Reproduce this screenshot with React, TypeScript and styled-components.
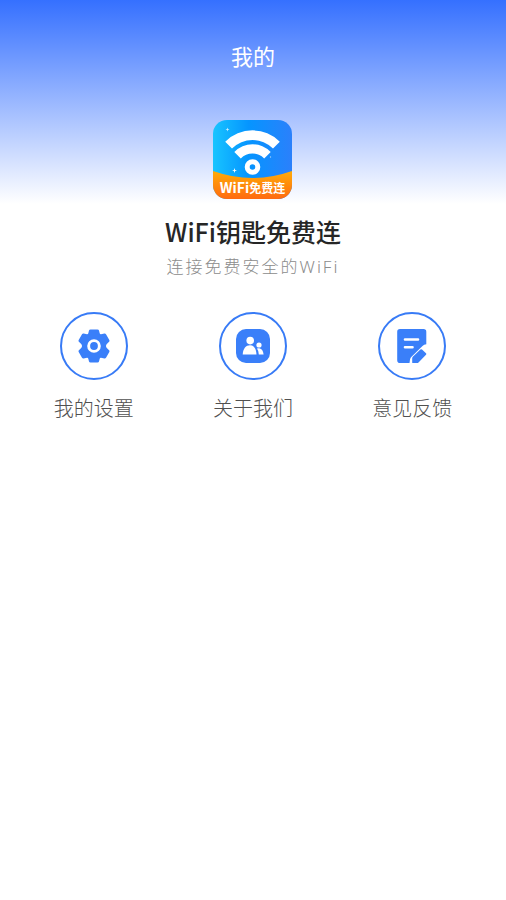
import React from "react";
import styled, { createGlobalStyle } from "styled-components";

const GlobalStyle = createGlobalStyle`
  *, *::before, *::after { box-sizing: border-box; }
  body {
    margin: 0;
    background: #ffffff;
    font-family: "Noto Sans CJK SC", "Noto Sans", sans-serif;
  }
`;

const Page = styled.main`
  min-height: 100vh;
  padding: 39px 14px 24px;
  background: linear-gradient(180deg, #3570ff 0, #ffffff 204px) #ffffff;
  display: flex;
  flex-direction: column;
  align-items: center;
`;

const PageTitle = styled.h1`
  margin: 0;
  font-size: 22px;
  line-height: 32px;
  font-weight: 400;
  color: #ffffff;
`;

const Profile = styled.section`
  margin-top: 49px;
  display: flex;
  flex-direction: column;
  align-items: center;
`;

const AppLogo = styled.svg`
  display: block;
  width: 80px;
  height: 80px;
`;

const AppName = styled.h2`
  margin: 13px 0 0;
  font-size: 25px;
  line-height: 36px;
  font-weight: 500;
  color: #262626;
`;

const Slogan = styled.p`
  margin: 6px 0 0;
  font-family: "Noto Sans", "Noto Sans CJK SC", sans-serif;
  font-size: 17px;
  line-height: 24px;
  font-weight: 300;
  letter-spacing: 2px;
  color: #8c8c8c;
`;

const Menu = styled.nav`
  width: 100%;
  margin-top: 33px;
  display: grid;
  grid-template-columns: repeat(3, 1fr);
`;

const MenuButton = styled.button`
  padding: 0;
  border: 0;
  background: none;
  font: inherit;
  cursor: pointer;
  display: flex;
  flex-direction: column;
  align-items: center;
  gap: 14px;
`;

const IconRing = styled.span`
  width: 68px;
  height: 68px;
  border: 2px solid #387bf6;
  border-radius: 50%;
  display: flex;
  align-items: center;
  justify-content: center;
`;

const MenuIcon = styled.svg`
  width: 36px;
  height: 36px;
  fill: #3a7ff9;
`;

const MenuLabel = styled.span`
  font-size: 20px;
  line-height: 28px;
  font-weight: 300;
  color: #505050;
`;

function WifiLogo() {
  return (
    <AppLogo viewBox="0 0 80 80" role="img" aria-label="WiFi免费连">
      <defs>
        <linearGradient id="sky" x1="0" y1="0" x2="1" y2="0">
          <stop offset="0" stopColor="#18c4ff" />
          <stop offset="0.45" stopColor="#0595ff" />
          <stop offset="1" stopColor="#2b80fb" />
        </linearGradient>
        <linearGradient id="sunset" x1="0" y1="0" x2="0" y2="1">
          <stop offset="0" stopColor="#ffac08" />
          <stop offset="1" stopColor="#ff6a10" />
        </linearGradient>
        <clipPath id="tile">
          <rect width="79" height="79" rx="14" />
        </clipPath>
      </defs>
      <g clipPath="url(#tile)">
        <rect width="79" height="79" fill="url(#sky)" />
        <path d="M0 51Q39.500 65 79 51V79H0Z" fill="url(#sunset)" />
      </g>
      <g fill="#ffffff">
        <path d="M12.200 21.700A38.500 38.500 0 0 1 66.800 21.700L60 28.500A29 29 0 0 0 19 28.500Z" />
        <path d="M21.300 32A25.200 25.200 0 0 1 57.700 32L51.200 38.500A16 16 0 0 0 27.800 38.500Z" />
        <path d="M14.500 7.500l.5 1.500 1.500.5-1.500.5-.5 1.500-.5-1.500-1.500-.5 1.500-.5z" opacity="0.8" />
        <path d="M21.500 48l.6 1.900 1.900.6-1.900.6-.6 1.900-.6-1.900-1.900-.6 1.900-.6z" />
        <circle cx="57.500" cy="37" r="0.700" opacity="0.600" />
      </g>
      <circle cx="39.500" cy="47" r="5.300" fill="none" stroke="#ffffff" strokeWidth="5" />
      <text x="39.500" y="72.500" textAnchor="middle" fill="#ffffff" fontWeight="700" fontSize="12">
        <tspan fontSize="14">WiFi</tspan>免费连
      </text>
    </AppLogo>
  );
}

function GearIcon() {
  return (
    <MenuIcon viewBox="0 0 36 36" aria-hidden="true">
      <path
        fillRule="evenodd"
        d="M14.500 1.500h7q1.200 0 1.500 1.100l.7 2.700q.3 1 1.300.9l3.400-.7q1-.2 1.600.8l3.300 5.700q.6 1-.2 1.800L30.800 16q-.8.900-.8 2t.8 2l2.300 2.200q.8.800.2 1.800l-3.300 5.700q-.6 1-1.600.8l-3.400-.7q-1-.1-1.300.9l-.7 2.700q-.3 1.100-1.500 1.100h-7q-1.200 0-1.500-1.100l-.7-2.700q-.3-1-1.300-.9l-3.400.7q-1 .2-1.600-.8l-3.300-5.700q-.6-1 .2-1.800L5.200 20q.8-.9.800-2t-.8-2l-2.300-2.200q-.8-.8-.2-1.800l3.300-5.700q.6-1 1.600-.8l3.400.7q1 .1 1.300-.9l.7-2.700q.3-1.100 1.500-1.100zM18 11.200a6.800 6.800 0 1 0 0 13.600a6.800 6.800 0 1 0 0-13.600z"
      />
      <circle cx="18" cy="18" r="3.900" />
    </MenuIcon>
  );
}

function PeopleIcon() {
  return (
    <MenuIcon viewBox="0 0 36 36" aria-hidden="true">
      <rect x="1" y="1" width="34" height="34" rx="10" />
      <g fill="#ffffff">
        <circle cx="15.200" cy="12.600" r="3.800" />
        <path d="M7.700 26.500C8 20.500 11 17.300 15 17.300S21.200 20.500 21.500 26.500Z" />
        <circle cx="24" cy="17" r="2.600" />
        <path d="M22 20.600q1-.5 2.200-.3c2.800.4 4 3 4.400 6.200h-4.800q0-3.400-1.800-5.900z" />
      </g>
    </MenuIcon>
  );
}

function FeedbackIcon() {
  return (
    <MenuIcon viewBox="0 0 36 36" aria-hidden="true">
      <path d="M6 1H29.500a2.800 2.800 0 0 1 2.800 2.800V16.300Q30 16.600 28.500 18L17 29.300q-1.500 1.500-1.500 5.700H6a2.800 2.800 0 0 1-2.800-2.800V3.800A2.800 2.800 0 0 1 6 1z" />
      <path d="M11 11.500H24M11 19.300H18.500" stroke="#ffffff" strokeWidth="2.600" strokeLinecap="round" />
      <path d="M26.400 21.600q.8-.8 1.600 0l4 3.600q.8.800 0 1.600L24.500 34.400q-.6.600-1.400.6h-4.300q-.6 0-.6-.6v-4.200q0-.8.6-1.400z" />
    </MenuIcon>
  );
}

const menuItems = [
  { label: "我的设置", Icon: GearIcon },
  { label: "关于我们", Icon: PeopleIcon },
  { label: "意见反馈", Icon: FeedbackIcon },
];

export default function App() {
  return (
    <>
      <GlobalStyle />
      <Page lang="zh-CN">
        <PageTitle>我的</PageTitle>
        <Profile>
          <WifiLogo />
          <AppName>WiFi钥匙免费连</AppName>
          <Slogan>连接免费安全的WiFi</Slogan>
        </Profile>
        <Menu aria-label="我的">
          {menuItems.map(({ label, Icon }) => (
            <MenuButton key={label} type="button">
              <IconRing>
                <Icon />
              </IconRing>
              <MenuLabel>{label}</MenuLabel>
            </MenuButton>
          ))}
        </Menu>
      </Page>
    </>
  );
}
